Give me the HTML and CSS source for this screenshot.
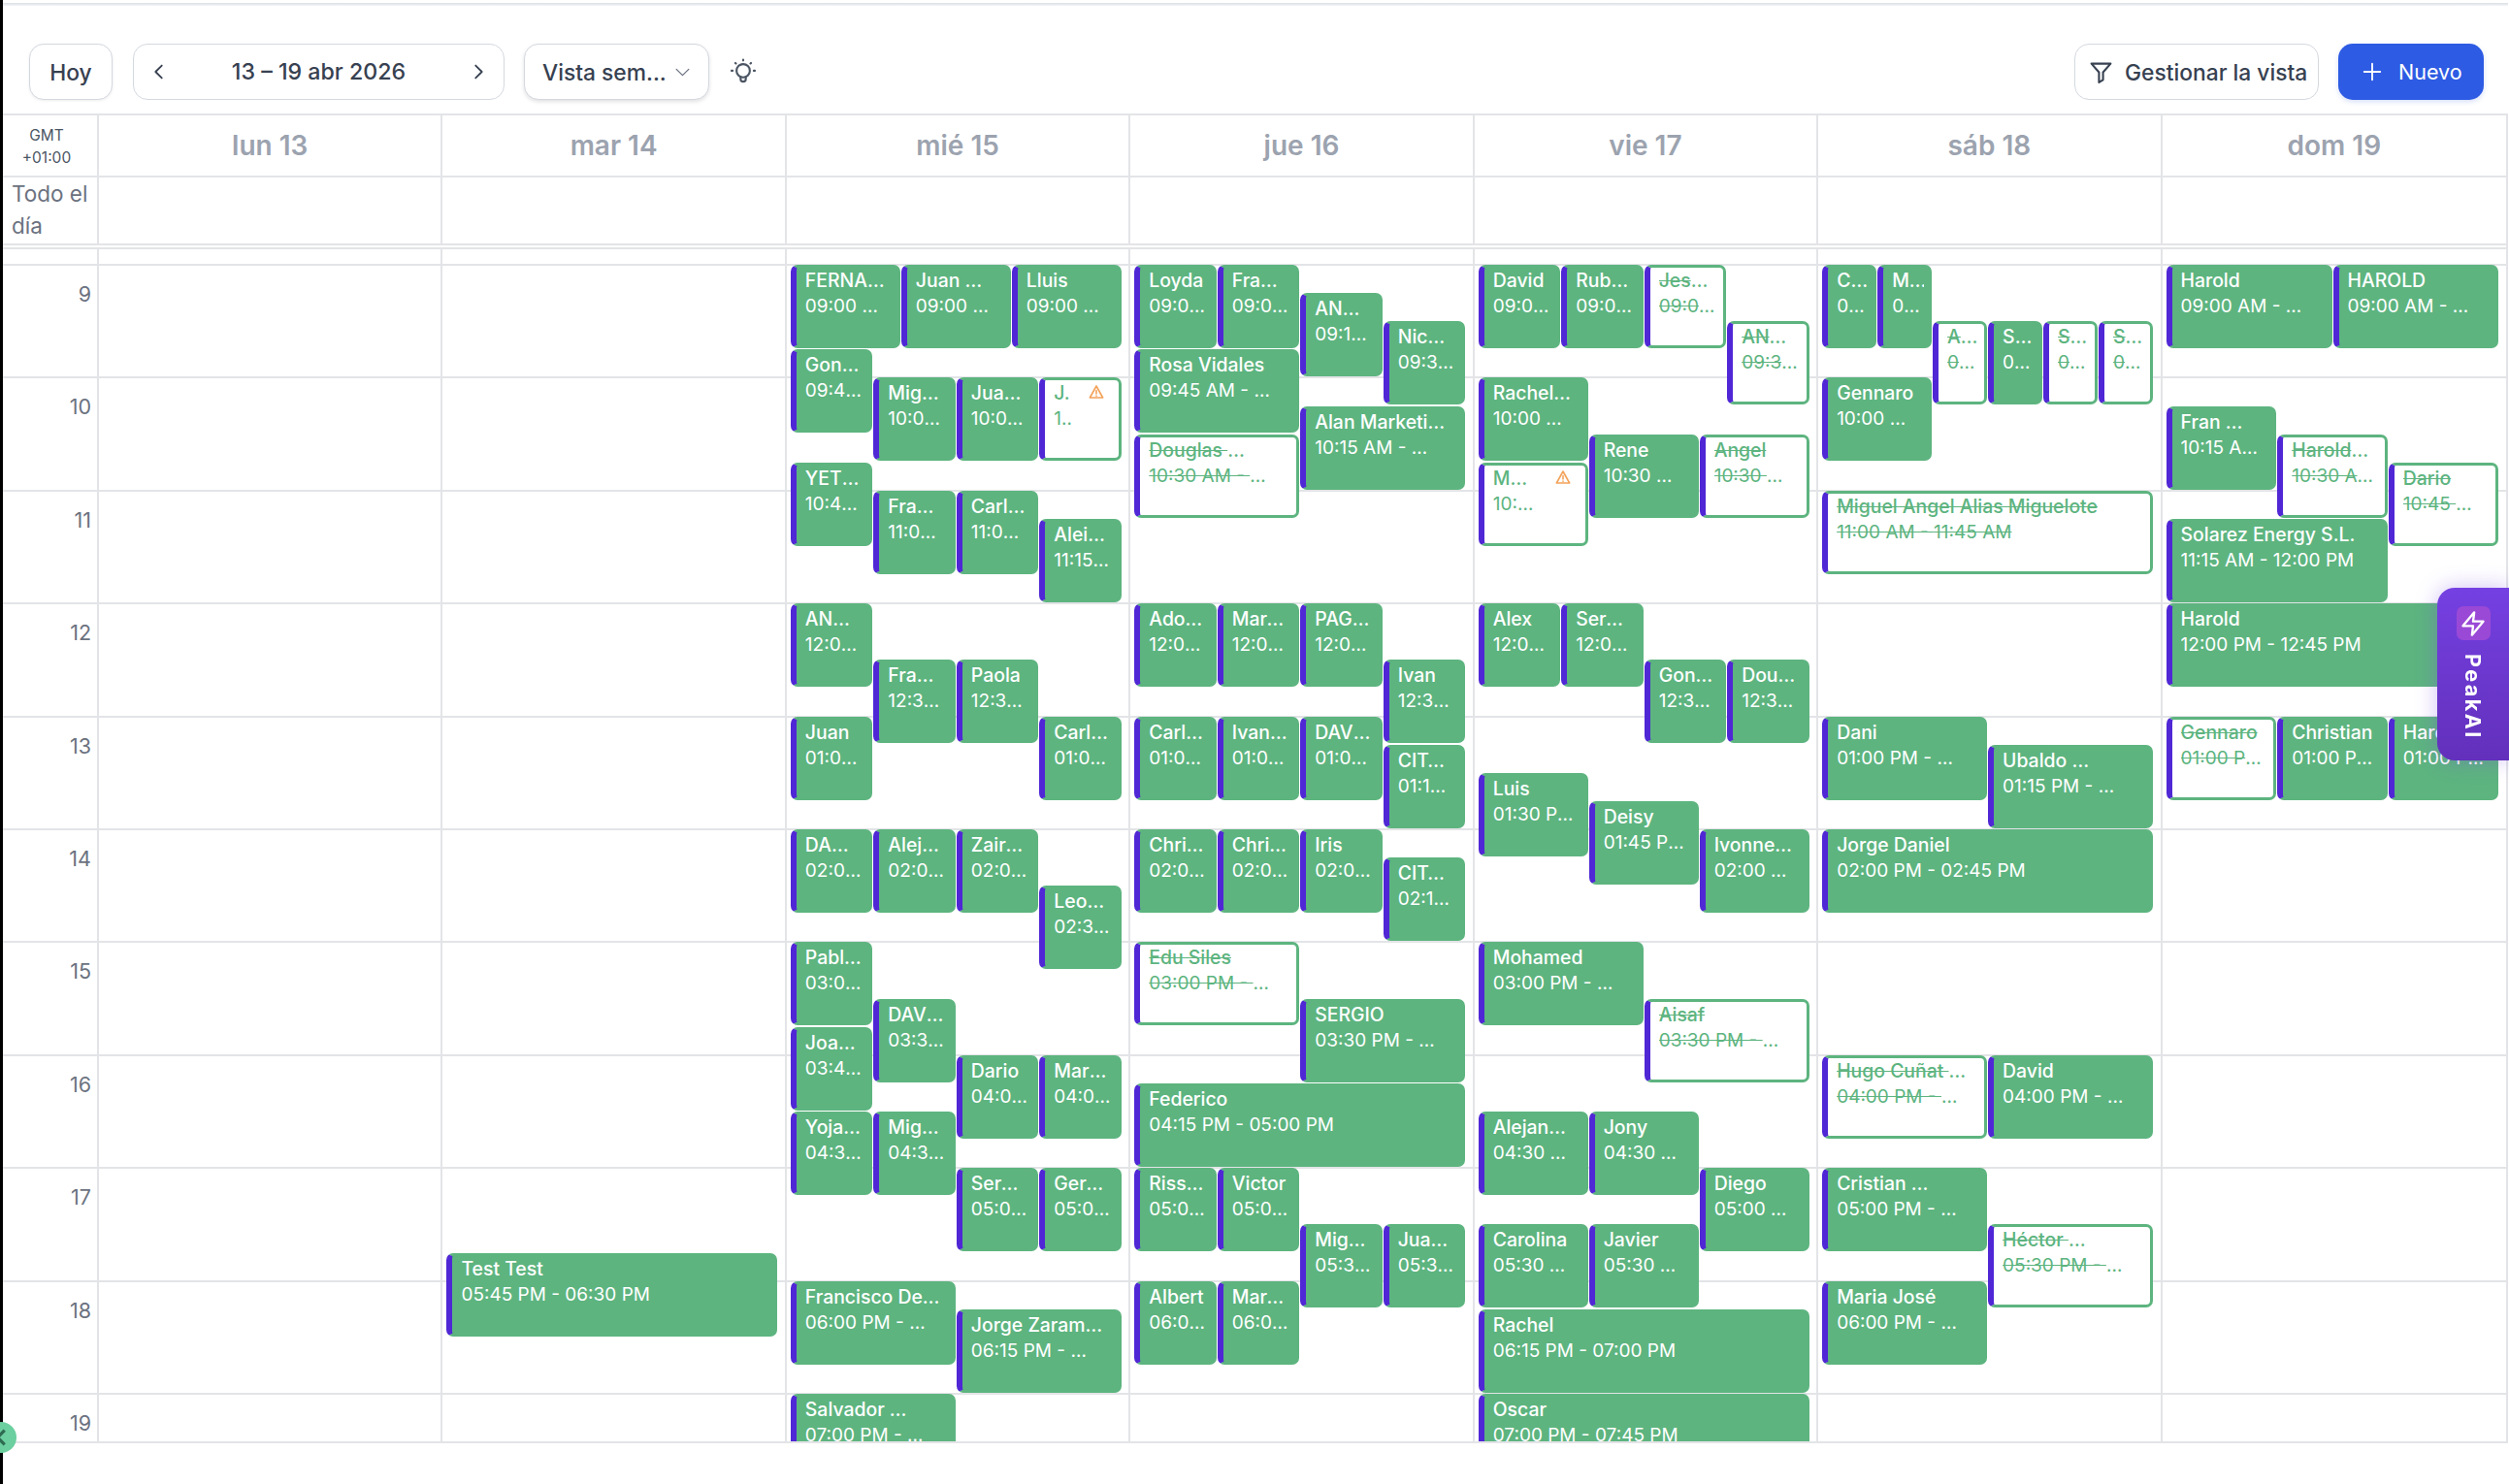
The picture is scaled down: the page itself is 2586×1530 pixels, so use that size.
FILE: index.html
```html
<!DOCTYPE html>
<html lang="es">
<head>
  <meta charset="UTF-8" />
  <title>Calendario</title>
  <link rel="stylesheet" href="styles.css">
</head>
<body>
  <div class="side-strip"></div>
  <main class="page">
    <div class="top-shadow"></div>

    <div class="toolbar">
      <button class="btn btn-today">Hoy</button>
      <div class="btn date-nav">
        <svg class="chevron" viewBox="0 0 24 24"><path d="M15 5l-7 7 7 7"/></svg>
        <span>13 – 19 abr 2026</span>
        <svg class="chevron" viewBox="0 0 24 24"><path d="M9 5l7 7-7 7"/></svg>
      </div>
      <button class="btn view-select">
        <span>Vista sem...</span>
        <svg class="chevron chevron-thin" viewBox="0 0 24 24"><path d="M4 8l8 8 8-8"/></svg>
      </button>
      <svg class="bulb" viewBox="0 0 28 28">
        <circle cx="14" cy="13" r="6.4"/>
        <path d="M11.5 19v2a2.5 2.5 0 0 0 5 0v-2"/>
        <path class="rays" d="M14 2.5v.6M6.5 5.5l.5.5M21.5 5.5l-.5.5M2.8 13h1M24.2 13h1"/>
      </svg>
      <div class="toolbar-right">
        <button class="btn btn-filter">
          <svg class="filter-icon" viewBox="0 0 24 24"><path d="M2.5 3.5h19l-7.5 8.5v7.5l-4 2.5V12z"/></svg>
          Gestionar la vista
        </button>
        <button class="btn btn-new">
          <svg class="plus-icon" viewBox="0 0 24 24"><path d="M12 3v18M3 12h18"/></svg>
          Nuevo
        </button>
      </div>
    </div>

    <div class="week">
      <div class="week-row week-head">
        <div class="gmt">GMT<br>+01:00</div>
        <div class="day-name">lun 13</div>
        <div class="day-name">mar 14</div>
        <div class="day-name">mié 15</div>
        <div class="day-name">jue 16</div>
        <div class="day-name">vie 17</div>
        <div class="day-name">sáb 18</div>
        <div class="day-name">dom 19</div>
      </div>
      <div class="week-row all-day">
        <div class="all-day-label">Todo el día</div>
        <div></div><div></div><div></div><div></div><div></div><div></div><div></div>
      </div>
      <div class="week-row week-body" id="week-body"></div>
    </div>
  </main>

  <div class="peak-tab">
    <span class="peak-icon">
      <svg viewBox="0 0 24 24"><path d="M13 2 3 14h9l-1 8 10-12h-9l1-8z"/></svg>
    </span>
    <span class="peak-label">PeakAI</span>
  </div>

  <div class="collapse-dot">
    <svg viewBox="0 0 24 24"><path d="M15 4l-8 8 8 8"/></svg>
  </div>

  <script src="app.js"></script>
</body>
</html>
```

FILE: styles.css
```css
html, body {
  height: 100%;
}
body {
  margin: 0;
  display: flex;
  overflow: hidden;
  font-family: Inter, 'Noto Sans', sans-serif;
  background-color: white;
  color: #374151;
}
.side-strip {
  width: 3px;
  flex-shrink: 0;
  background-color: #000;
}
.page {
  flex: 1;
  min-width: 0;
  padding-right: 1px;
}
.top-shadow {
  height: 3px;
  margin-bottom: 4px;
  margin-top: 3px;
  background: linear-gradient(#dbdfe5, #f4f5f7);
}

/* toolbar */
.toolbar {
  display: flex;
  align-items: center;
  height: 58px;
  margin-top: 39px;
  margin-bottom: 14px;
  padding-left: 27px;
  padding-right: 25px;
}
.btn {
  display: flex;
  align-items: center;
  box-sizing: border-box;
  height: 58px;
  border: 1.5px solid #d4d8df;
  border-radius: 15px;
  background-color: white;
  color: #374151;
  font-family: inherit;
  font-size: 22.8px;
  font-weight: 500;
  cursor: pointer;
}
.btn-today {
  width: 86px;
  justify-content: center;
  padding: 0;
  box-shadow: 0 1px 3px rgba(0, 0, 0, 0.08);
}
.date-nav {
  width: 383px;
  margin-left: 21px;
  padding: 0 15px;
  justify-content: space-between;
  font-size: 23.2px;
}
.view-select {
  width: 191px;
  margin-left: 20px;
  padding: 0 17px 0 18px;
  justify-content: space-between;
  box-shadow: 0 2px 4px rgba(0, 0, 0, 0.12);
}
.chevron {
  width: 22px;
  height: 22px;
  fill: none;
  stroke: #374151;
  stroke-width: 2;
  stroke-linecap: round;
  stroke-linejoin: round;
}
.chevron-thin {
  width: 19px;
  height: 19px;
  stroke: #6b7280;
  stroke-width: 1.6;
}
.bulb {
  width: 30px;
  height: 30px;
  margin-left: 20px;
  fill: none;
  stroke: #4b5563;
  stroke-width: 2;
  stroke-linecap: round;
}
.toolbar-right {
  display: flex;
  gap: 20px;
  margin-left: auto;
}
.btn-filter {
  width: 252px;
  padding: 0 0 0 14px;
  gap: 12px;
}
.filter-icon {
  width: 25px;
  height: 25px;
  fill: none;
  stroke: #374151;
  stroke-width: 2;
  stroke-linejoin: round;
}
.btn-new {
  width: 150px;
  padding: 0 0 0 24px;
  gap: 16px;
  border: none;
  background-color: #2d5be3;
  color: white;
  font-size: 21.5px;
  font-weight: 400;
  box-shadow: 0 2px 5px rgba(45, 91, 227, 0.2);
}
.plus-icon {
  width: 22px;
  height: 22px;
  fill: none;
  stroke: white;
  stroke-width: 2;
  stroke-linecap: round;
}

/* week grid */
.week {
  border-top: 2px solid #e3e4e7;
  border-right: 2px solid #e3e4e7;
}
.week-row {
  display: grid;
  grid-template-columns: 99px repeat(7, 1fr);
}
.week-row > div {
  border-right: 2px solid #e3e4e7;
  box-sizing: border-box;
}
.week-row > div:last-child {
  border-right: none;
}
.week-head {
  height: 62px;
  border-bottom: 2px solid #e3e4e7;
}
.gmt {
  padding-top: 9px;
  padding-right: 7px;
  text-align: center;
  font-size: 15.5px;
  line-height: 23px;
  color: #4b5563;
}
.day-name {
  display: flex;
  align-items: center;
  justify-content: center;
  padding-bottom: 1px;
  font-size: 28px;
  font-weight: 600;
  color: #9ca3af;
}
.all-day {
  height: 68px;
  border-bottom: 2px solid #e3e4e7;
}
.all-day-label {
  padding: 0 8px 0 9px;
  font-size: 22.5px;
  line-height: 33px;
  color: #6b7280;
}
.week-body {
  height: 1229px;
  overflow: hidden;
  border-top: 2px solid #e3e4e7;
  margin-top: 2px;
  border-bottom: 2px solid #e3e4e7;
}
.slot {
  box-sizing: border-box;
  height: 116.4px;
  border-top: 2px solid #e3e4e7;
}
.slot-first {
  height: 15px;
  border-top: none;
}
.hour {
  padding: 16px 6px 0 0;
  text-align: right;
  font-size: 21.5px;
  line-height: 26px;
  color: #6b7280;
}
.day-col {
  position: relative;
}
.events {
  position: absolute;
  top: 0;
  bottom: 0;
  left: 4px;
  right: 6.5px;
}

/* events */
.event {
  position: absolute;
  box-sizing: border-box;
  display: flex;
  height: 86px;
  padding-left: 9px;
  border: 3px solid #5db47f;
  border-left: 6px solid #5027d5;
  border-radius: 7px;
  background-color: #5db47f;
  color: white;
  font-size: 19px;
  overflow: hidden;
}
.event-text {
  flex: 1;
  min-width: 0;
  padding-top: 1px;
  padding-right: min(12px, 12.3%);
}
.event-name {
  line-height: 25px;
  font-weight: 500;
  font-size: 19.4px;
  white-space: nowrap;
  overflow: hidden;
  text-overflow: ellipsis;
}
.event-time {
  line-height: 27px;
  white-space: nowrap;
  overflow: hidden;
  text-overflow: ellipsis;
}
.keep {
  display: inline-block;
}
.event.cancelled,
.event.warned {
  background-color: white;
  color: #5db47f;
}
.event.cancelled .event-name,
.event.cancelled .event-time,
.event.cancelled .keep {
  text-decoration: line-through;
}
.warn-icon {
  flex-shrink: 0;
  width: 16px;
  height: 16px;
  margin: 4px 15px 0 8px;
  fill: none;
  stroke: #f4a259;
  stroke-width: 2.4;
  stroke-linejoin: round;
  stroke-linecap: round;
}

/* floating bits */
.peak-tab {
  position: fixed;
  top: 606px;
  right: 0;
  width: 74px;
  height: 178px;
  box-sizing: border-box;
  padding-top: 19px;
  display: flex;
  flex-direction: column;
  align-items: center;
  gap: 14px;
  border-radius: 18px 0 0 18px;
  background: linear-gradient(#7540e2, #6230bb);
  box-shadow: 0 0 22px rgba(120, 70, 230, 0.35);
}
.peak-icon {
  display: flex;
  align-items: center;
  justify-content: center;
  width: 35px;
  height: 35px;
  border-radius: 7px;
  background-color: #9a49d6;
}
.peak-icon svg {
  width: 28px;
  height: 28px;
  fill: none;
  stroke: white;
  stroke-width: 2;
  stroke-linejoin: round;
}
.peak-label {
  writing-mode: vertical-rl;
  color: white;
  font-size: 21.5px;
  font-weight: 700;
  letter-spacing: 2.5px;
  line-height: 24px;
}
.collapse-dot {
  position: fixed;
  left: -15px;
  top: 1466px;
  width: 32px;
  height: 32px;
  display: flex;
  align-items: center;
  justify-content: center;
  border-radius: 50%;
  background-color: #6bcf9f;
}
.collapse-dot svg {
  width: 22px;
  height: 22px;
  margin-left: 2px;
  fill: none;
  stroke: #2f6b52;
  stroke-width: 3.5;
}
```

FILE: app.js
```js
const HOUR_PX = 116.4;
const FIRST_HOUR = 9;
const TOP_OFFSET = 16;

// [name, start, from, to, columns, state]  state: c = cancelled, w = warning
// a | in a name marks the part that is dropped whole when it does not fit
const WEEK = [
  [],
  [
    ['Test Test', '17:45', 0, 1, 1],
  ],
  [
    ['FERNANDO Ruiz', '09:00', 0, 1, 3],
    ['Juan|Antonio', '09:00', 1, 2, 3],
    ['Lluis', '09:00', 2, 3, 3],
    ['Gonzalo Ruiz', '09:45', 0, 1, 4],
    ['Miguel Soto', '10:00', 1, 2, 4],
    ['Juan Pablo', '10:00', 2, 3, 4],
    ['J.', '10:00', 3, 4, 4, 'w'],
    ['YETZABEL Mora', '10:45', 0, 1, 4],
    ['Francisco', '11:00', 1, 2, 4],
    ['Carlos Vera', '11:00', 2, 3, 4],
    ['Aleix Ferrer', '11:15', 3, 4, 4],
    ['ANDREA Gil', '12:00', 0, 1, 4],
    ['Francisco', '12:30', 1, 2, 4],
    ['Paola', '12:30', 2, 3, 4],
    ['Juan', '13:00', 0, 1, 4],
    ['Carlos Vera', '13:00', 3, 4, 4],
    ['DANIEL Ros', '14:00', 0, 1, 4],
    ['Alejandro', '14:00', 1, 2, 4],
    ['Zaira Soler', '14:00', 2, 3, 4],
    ['Leonor Paz', '14:30', 3, 4, 4],
    ['Pablo Ortiz', '15:00', 0, 1, 4],
    ['DAVID Luna', '15:30', 1, 2, 4],
    ['Joaquín Rey', '15:45', 0, 1, 4],
    ['Dario', '16:00', 2, 3, 4],
    ['Marta Nieto', '16:00', 3, 4, 4],
    ['Yojana Cruz', '16:30', 0, 1, 4],
    ['Miguel Soto', '16:30', 1, 2, 4],
    ['Sergio Mas', '17:00', 2, 3, 4],
    ['Gerard Pons', '17:00', 3, 4, 4],
    ['Francisco De Asís Moreno', '18:00', 0, 2, 4],
    ['Jorge Zaramillo Ortega', '18:15', 2, 4, 4],
    ['Salvador|Montes', '19:00', 0, 2, 4],
  ],
  [
    ['Loyda', '09:00', 0, 1, 4],
    ['Francisco', '09:00', 1, 2, 4],
    ['ANA Rojas', '09:15', 2, 3, 4],
    ['Nicolás', '09:30', 3, 4, 4],
    ['Rosa Vidales', '09:45', 0, 2, 4],
    ['Alan Marketing Digital', '10:15', 2, 4, 4],
    ['Douglas|Romero Fernández', '10:30', 0, 2, 4, 'c'],
    ['Adolfo Pla', '12:00', 0, 1, 4],
    ['Marcos Gil', '12:00', 1, 2, 4],
    ['PAGOS Web', '12:00', 2, 3, 4],
    ['Ivan', '12:30', 3, 4, 4],
    ['Carlos Vera', '13:00', 0, 1, 4],
    ['Ivan Solís', '13:00', 1, 2, 4],
    ['DAVID Luna', '13:00', 2, 3, 4],
    ['CITA Previa', '13:15', 3, 4, 4],
    ['Christian', '14:00', 0, 1, 4],
    ['Christian', '14:00', 1, 2, 4],
    ['Iris', '14:00', 2, 3, 4],
    ['CITA Previa', '14:15', 3, 4, 4],
    ['Edu Siles', '15:00', 0, 2, 4, 'c'],
    ['SERGIO', '15:30', 2, 4, 4],
    ['Federico', '16:15', 0, 4, 4],
    ['Rissa Díaz', '17:00', 0, 1, 4],
    ['Victor', '17:00', 1, 2, 4],
    ['Miguel Soto', '17:30', 2, 3, 4],
    ['Juan Pablo', '17:30', 3, 4, 4],
    ['Albert', '18:00', 0, 1, 4],
    ['Marcos Gil', '18:00', 1, 2, 4],
  ],
  [
    ['David', '09:00', 0, 1, 4],
    ['Rubén Sanz', '09:00', 1, 2, 4],
    ['Jesús Lara', '09:00', 2, 3, 4, 'c'],
    ['ANA Rojas', '09:30', 3, 4, 4, 'c'],
    ['Rachelina', '10:00', 0, 1, 3],
    ['Rene', '10:30', 1, 2, 3],
    ['Angel', '10:30', 2, 3, 3, 'c'],
    ['Manuel Ríos', '10:45', 0, 1, 3, 'w'],
    ['Alex', '12:00', 0, 1, 4],
    ['Sergio Mas', '12:00', 1, 2, 4],
    ['Gonzalo Ruiz', '12:30', 2, 3, 4],
    ['Douglas Romero', '12:30', 3, 4, 4],
    ['Luis', '13:30', 0, 1, 3],
    ['Deisy', '13:45', 1, 2, 3],
    ['Ivonnes Prat', '14:00', 2, 3, 3],
    ['Mohamed', '15:00', 0, 2, 4],
    ['Aisaf', '15:30', 2, 4, 4, 'c'],
    ['Alejandro Vega', '16:30', 0, 1, 3],
    ['Jony', '16:30', 1, 2, 3],
    ['Diego', '17:00', 2, 3, 3],
    ['Carolina', '17:30', 0, 1, 3],
    ['Javier', '17:30', 1, 2, 3],
    ['Rachel', '18:15', 0, 3, 3],
    ['Oscar', '19:00', 0, 3, 3],
  ],
  [
    ['Carlos Vera', '09:00', 0, 1, 6],
    ['Marta Nieto', '09:00', 1, 2, 6],
    ['ANA Rojas', '09:30', 2, 3, 6, 'c'],
    ['Sergio Mas', '09:30', 3, 4, 6],
    ['Sergio Mas', '09:30', 4, 5, 6, 'c'],
    ['Sergio Mas', '09:30', 5, 6, 6, 'c'],
    ['Gennaro', '10:00', 0, 2, 6],
    ['Miguel Angel Alias Miguelote', '11:00', 0, 6, 6, 'c'],
    ['Dani', '13:00', 0, 1, 2],
    ['Ubaldo|Ferrándiz Costa', '13:15', 1, 2, 2],
    ['Jorge Daniel', '14:00', 0, 2, 2],
    ['Hugo Cuñat|Pérez', '16:00', 0, 1, 2, 'c'],
    ['David', '16:00', 1, 2, 2],
    ['Cristian|Moreno Sánchez', '17:00', 0, 1, 2],
    ['Héctor|Fernández Gil', '17:30', 1, 2, 2, 'c'],
    ['Maria José', '18:00', 0, 1, 2],
  ],
  [
    ['Harold', '09:00', 0, 1, 2],
    ['HAROLD', '09:00', 1, 2, 2],
    ['Fran|Delgado', '10:15', 0, 1, 3],
    ['Harold|Mendoza', '10:30', 1, 2, 3, 'c'],
    ['Dario', '10:45', 2, 3, 3, 'c'],
    ['Solarez Energy S.L.', '11:15', 0, 2, 3],
    ['Harold', '12:00', 0, 3, 3],
    ['Gennaro', '13:00', 0, 1, 3, 'c'],
    ['Christian', '13:00', 1, 2, 3],
    ['Harold', '13:00', 2, 3, 3],
  ],
];

function toMinutes(start) {
  const [h, m] = start.split(':').map(Number);
  return h * 60 + m;
}

function formatTime(mins) {
  const h = Math.floor(mins / 60);
  const m = mins % 60;
  const h12 = h > 12 ? h - 12 : h;
  return String(h12).padStart(2, '0') + ':' + String(m).padStart(2, '0') + (h >= 12 ? ' PM' : ' AM');
}

function addSlots(col) {
  const first = document.createElement('div');
  first.className = 'slot slot-first';
  col.appendChild(first);
  for (let h = FIRST_HOUR; h <= 19; h++) {
    const slot = document.createElement('div');
    slot.className = 'slot';
    col.appendChild(slot);
  }
}

// text + a tail that ellipsis hides whole
function fillLine(el, head, tail) {
  el.textContent = head;
  if (tail) {
    const span = document.createElement('span');
    span.className = 'keep';
    span.textContent = tail;
    el.appendChild(span);
  }
}

function makeEvent([name, start, from, to, cols, state]) {
  const mins = toMinutes(start);
  const el = document.createElement('div');
  el.className = 'event' + (state === 'c' ? ' cancelled' : '') + (state === 'w' ? ' warned' : '');
  el.style.top = (TOP_OFFSET + (mins - FIRST_HOUR * 60) / 60 * HOUR_PX) + 'px';
  el.style.left = (from / cols * 100) + '%';
  el.style.width = 'calc(' + ((to - from) / cols * 100) + '% - 1px)';

  const text = document.createElement('div');
  text.className = 'event-text';
  const title = document.createElement('div');
  title.className = 'event-name';
  const [first, rest] = name.split('|');
  fillLine(title, rest ? first + ' ' : first, rest);
  const time = document.createElement('div');
  time.className = 'event-time';
  fillLine(time, formatTime(mins) + ' - ', formatTime(mins + 45));
  text.append(title, time);
  el.appendChild(text);

  if (state === 'w') {
    el.insertAdjacentHTML('beforeend',
      '<svg class="warn-icon" viewBox="0 0 24 24"><path d="M12 3 2 21h20L12 3z"/><path d="M12 10v5M12 18v.5"/></svg>');
  }
  return el;
}

const body = document.getElementById('week-body');

const timeCol = document.createElement('div');
addSlots(timeCol);
timeCol.querySelectorAll('.slot:not(.slot-first)').forEach((slot, i) => {
  slot.classList.add('hour');
  slot.textContent = FIRST_HOUR + i;
});
body.appendChild(timeCol);

WEEK.forEach((events) => {
  const col = document.createElement('div');
  col.className = 'day-col';
  addSlots(col);
  const layer = document.createElement('div');
  layer.className = 'events';
  events.forEach((ev) => layer.appendChild(makeEvent(ev)));
  col.appendChild(layer);
  body.appendChild(col);
});
```
